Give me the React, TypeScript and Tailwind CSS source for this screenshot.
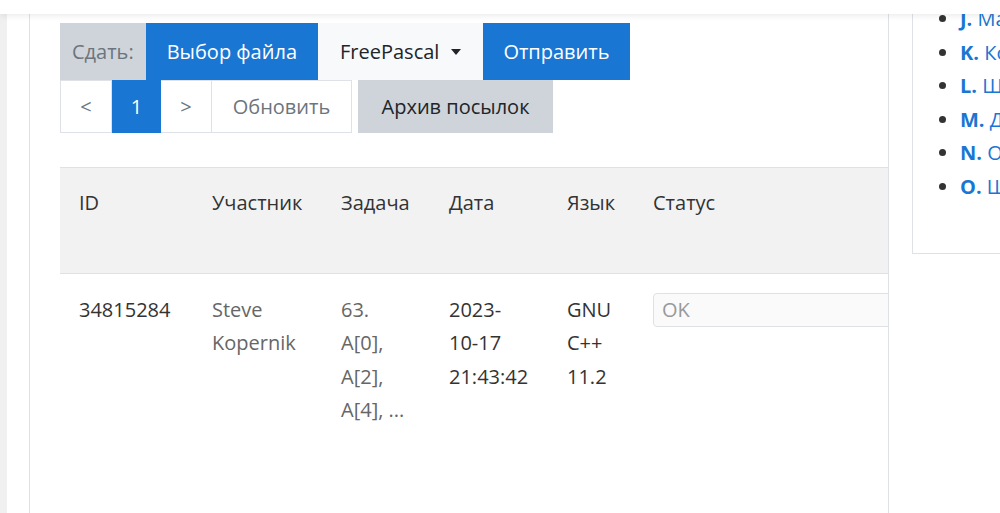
const problems = [
  { letter: "J.", name: "Массивы" },
  { letter: "K.", name: "Конкатенация" },
  { letter: "L.", name: "Шифр" },
  { letter: "M.", name: "Делители" },
  { letter: "N.", name: "Отрезки" },
  { letter: "O.", name: "Шахматы" },
];

function Toolbar() {
  return (
    <div className="flex flex-col items-start">
      <div className="flex h-[57px] text-[20px]">
        <span className="flex items-center bg-[#ced4da] px-[12px] text-[#6c757d]">Сдать:</span>
        <button className="flex items-center bg-[#1976d2] px-[21px] text-white">Выбор файла</button>
        <button className="flex items-center gap-3 bg-[#f8f9fa] px-[22px] text-[#212529]">
          FreePascal
          <svg width="10" height="6" viewBox="0 0 10 6">
            <path d="M0 0h10L5 6z" fill="#212529" />
          </svg>
        </button>
        <button className="flex items-center bg-[#1976d2] px-[20px] text-white">Отправить</button>
      </div>
      <div className="flex h-[53px] gap-[6px] text-[20px]">
        <div className="flex">
          <span className="flex w-[52px] items-center justify-center border border-[#dee2e6] text-[#6c757d]">&lt;</span>
          <span className="flex w-[49px] items-center justify-center bg-[#1976d2] text-white">1</span>
          <span className="flex w-[51px] items-center justify-center border border-l-0 border-[#dee2e6] text-[#6c757d]">&gt;</span>
          <span className="flex w-[140px] items-center justify-center border border-l-0 border-[#dee2e6] text-[#6c757d]">Обновить</span>
        </div>
        <button className="flex w-[195px] items-center justify-center bg-[#ced4da] text-[#212529]">Архив посылок</button>
      </div>
    </div>
  );
}

function SubmissionsTable() {
  return (
    <table className="mt-[34px] w-[900px] border-collapse text-left text-[20px] leading-[33.4px]">
      <thead>
        <tr className="h-[106px] border-y border-[#dee2e6] bg-[#f2f2f2] text-[#333]">
          <th className="w-[133px] pb-[36px] pl-[19px] font-normal">ID</th>
          <th className="w-[129px] pb-[36px] pl-[19px] font-normal">Участник</th>
          <th className="w-[108px] pb-[36px] pl-[19px] font-normal">Задача</th>
          <th className="w-[118px] pb-[36px] pl-[19px] font-normal">Дата</th>
          <th className="w-[86px] pb-[36px] pl-[19px] font-normal">Язык</th>
          <th className="pb-[36px] pl-[19px] font-normal">Статус</th>
        </tr>
      </thead>
      <tbody>
        <tr className="align-top">
          <td className="pl-[19px] pt-[19px] text-[#333]">34815284</td>
          <td className="pl-[19px] pt-[19px] text-[#666]">Steve<br />Kopernik</td>
          <td className="pl-[19px] pt-[19px] text-[#666]">63.<br />A[0],<br />A[2],<br />A[4], ...</td>
          <td className="pl-[19px] pt-[19px] text-[#333]">2023-<br />10-17<br />21:43:42</td>
          <td className="pl-[19px] pt-[19px] text-[#333]">GNU<br />C++<br />11.2</td>
          <td className="pl-[19px] pt-[19px]">
            <div className="flex h-[34px] items-center rounded-l border border-[#dee2e6] bg-[#fafafa] px-[8px] text-[#999]">OK</div>
          </td>
        </tr>
      </tbody>
    </table>
  );
}

export default function App() {
  return (
    <div className="relative h-[513px] w-[1000px] overflow-hidden bg-white font-['Open_Sans',sans-serif]">
      <div className="absolute inset-x-0 top-0 z-10 h-[14px] bg-white shadow-[0_2px_6px_rgba(0,0,0,0.08)]" />
      <div className="flex h-full">
        <div className="w-[7px] shrink-0 bg-[#f0f0f0]" />
        <div className="w-[22px] shrink-0" />
        <main className="h-[560px] w-[860px] shrink-0 overflow-hidden border-x border-[#dee2e6] pl-[30px] pt-[23px]">
          <Toolbar />
          <SubmissionsTable />
        </main>
        <aside className="ml-[23px] h-[254px] w-[200px] shrink-0 border-b border-l border-[#dee2e6] pl-[29px] pt-[2px]">
          <ul className="list-disc pl-[18px] text-[20px] leading-[33.5px] text-[#333]">
            {problems.map((p) => (
              <li key={p.letter} className="whitespace-nowrap">
                <a className="text-[#1976d2]">
                  <b>{p.letter}</b> {p.name}
                </a>
              </li>
            ))}
          </ul>
        </aside>
      </div>
    </div>
  );
}
